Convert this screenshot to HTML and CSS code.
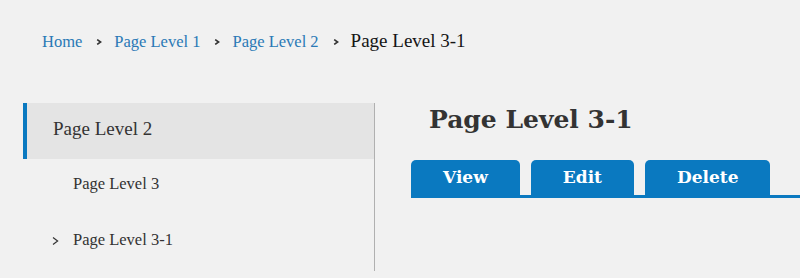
FILE: index.html
```html
<!DOCTYPE html>
<html lang="en">
<head>
<meta charset="utf-8">
<title>Page Level 3-1</title>
<link rel="stylesheet" href="styles.css">
</head>
<body>
<nav class="breadcrumb">
  <a class="crumb" href="#">Home</a>
  <svg class="sep" width="6" height="6" viewBox="0 0 6 6"><polyline points="1.2,0.6 4.6,3 1.2,5.4" fill="none" stroke="#333" stroke-width="1.6"/></svg>
  <a class="crumb" href="#">Page Level 1</a>
  <svg class="sep" width="6" height="6" viewBox="0 0 6 6"><polyline points="1.2,0.6 4.6,3 1.2,5.4" fill="none" stroke="#333" stroke-width="1.6"/></svg>
  <a class="crumb" href="#">Page Level 2</a>
  <svg class="sep" width="6" height="6" viewBox="0 0 6 6"><polyline points="1.2,0.6 4.6,3 1.2,5.4" fill="none" stroke="#333" stroke-width="1.6"/></svg>
  <span class="crumb current">Page Level 3-1</span>
</nav>
<div class="main">
  <aside class="sidebar">
    <div class="nav-item active">Page Level 2</div>
    <div class="nav-item sub">Page Level 3</div>
    <div class="nav-item sub current-page">
      <svg class="chev" width="7" height="8" viewBox="0 0 7 8"><polyline points="1,0.6 5.6,4 1,7.4" fill="none" stroke="#333" stroke-width="1.2"/></svg>
      <span>Page Level 3-1</span>
    </div>
  </aside>
  <section class="content">
    <h1 class="title">Page Level 3-1</h1>
    <div class="tabs">
      <a class="tab" href="#">View</a>
      <a class="tab" href="#">Edit</a>
      <a class="tab" href="#">Delete</a>
    </div>
  </section>
</div>
</body>
</html>
```
FILE: styles.css
```css
html, body {
  margin: 0;
  padding: 0;
  background: #f1f1f1;
}
body {
  font-family: "Liberation Serif", "Times New Roman", serif;
  color: #333;
  width: 800px;
  height: 278px;
  overflow: hidden;
}
.breadcrumb {
  display: flex;
  align-items: baseline;
  box-sizing: border-box;
  height: 51px;
  padding: 31px 0 0 42px;
}
.crumb {
  font-size: 16.5px;
  line-height: 20px;
  color: #2a79b6;
  text-decoration: none;
}
.crumb.current {
  font-size: 19px;
  color: #151515;
}
.sep {
  flex: none;
  align-self: flex-start;
  margin: 8px 12px 0 14px;
}
.main {
  display: flex;
  margin-top: 52px;
}
.sidebar {
  box-sizing: border-box;
  width: 352px;
  margin-left: 23px;
  border-right: 1px solid #b0b0b0;
}
.nav-item {
  display: flex;
  align-items: baseline;
  color: #333;
}
.nav-item.active {
  background: #e4e4e4;
  border-left: 4px solid #0a79c0;
  padding: 14px 0 18px 26px;
  font-size: 19px;
  line-height: 24px;
}
.nav-item.sub {
  padding: 14px 0 20px 50px;
  font-size: 16.5px;
  line-height: 22px;
}
.nav-item.current-page {
  padding-left: 29px;
}
.chev {
  flex: none;
  align-self: flex-start;
  margin: 8px 14px 0 0;
}
.content {
  flex: 1;
  padding-left: 36px;
}
.title {
  margin: 2px 0 0 18px;
  font-family: "DejaVu Serif", serif;
  font-weight: bold;
  font-size: 25px;
  line-height: 30px;
  color: #333;
}
.tabs {
  display: flex;
  gap: 11px;
  margin-top: 25px;
  border-bottom: 3px solid #0a79c0;
}
.tab {
  height: 35px;
  line-height: 35px;
  padding: 0 32px;
  background: #0a79c0;
  color: #fff;
  text-decoration: none;
  border-radius: 5px 5px 0 0;
  font-family: "DejaVu Serif", serif;
  font-weight: bold;
  font-size: 17px;
}
```
